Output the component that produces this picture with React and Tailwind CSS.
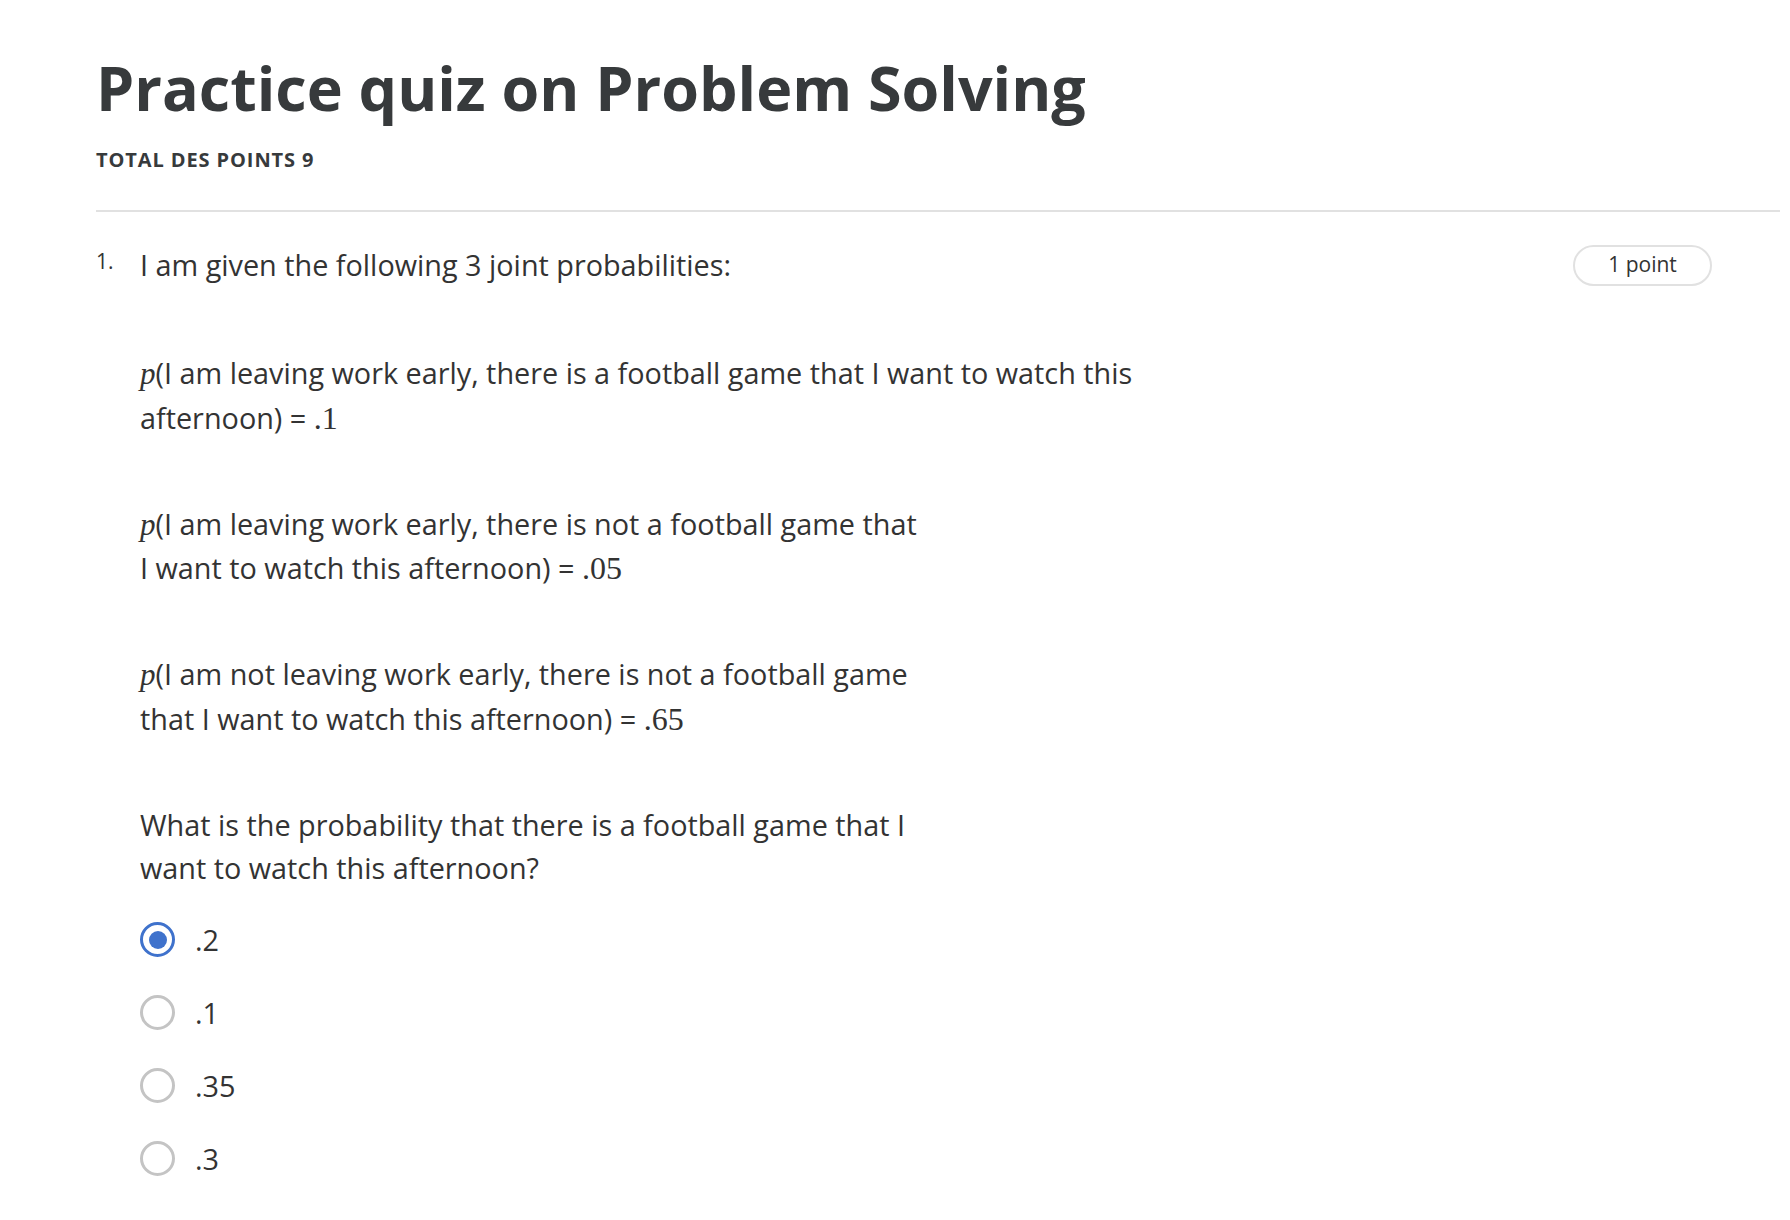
import { useState } from 'react';

const options = ['.2', '.1', '.35', '.3'];

function MathVar({ children }) {
  return (
    <span className="font-['Liberation_Serif',serif] text-[31px] italic">
      {children}
    </span>
  );
}

function MathNum({ children }) {
  return (
    <span className="font-['Liberation_Serif',serif] text-[32px]">{children}</span>
  );
}

function RadioOption({ label, checked, onSelect }) {
  return (
    <label
      className="flex h-[43px] cursor-pointer items-center gap-[20px]"
      onClick={onSelect}
    >
      {checked ? (
        <span className="flex h-[35px] w-[35px] items-center justify-center rounded-full border-[3px] border-[#3f72cc]">
          <span className="h-[18px] w-[18px] rounded-full bg-[#3f72cc]" />
        </span>
      ) : (
        <span className="h-[35px] w-[35px] rounded-full border-[3px] border-[#c4c4c4]" />
      )}
      <span className="text-[28.8px] leading-[43px]">{label}</span>
    </label>
  );
}

export default function App() {
  const [selected, setSelected] = useState('.2');

  return (
    <div className="min-h-screen bg-white pr-[10px] pl-[96px] font-['Open_Sans',sans-serif] text-[#333333]">
      <h1 className="pt-[48px] text-[61px] leading-[80px] font-bold text-[#373a3c]">
        Practice quiz on Problem Solving
      </h1>
      <div className="mt-[20px] text-[20px] leading-[24px] font-bold tracking-[0.9px] text-[#373a3c]">
        TOTAL DES POINTS 9
      </div>

      <div className="mt-[38px] h-[2px] bg-[#e1e1e1]" />

      <div className="flex items-start pt-[32px] pr-[68px]">
        <div className="mt-[2px] w-[44px] shrink-0 text-[21px] leading-[30px]">1.</div>

        <div className="flex grow flex-col">
          <div className="flex items-center justify-between">
            <p className="text-[28.8px] leading-[42px]">
              I am given the following 3 joint probabilities:
            </p>
            <span className="flex h-[41px] w-[139px] items-center justify-center rounded-full border-2 border-[#e1e1e1] text-[21px]">
              1 point
            </span>
          </div>

          <p className="mt-[65px] text-[28.8px] leading-[43.5px]">
            <MathVar>p</MathVar>(I am leaving work early, there is a football game that I want to watch this
            <br />
            afternoon) = <MathNum>.1</MathNum>
          </p>

          <p className="mt-[61.5px] text-[28.8px] leading-[43.5px]">
            <MathVar>p</MathVar>(I am leaving work early, there is not a football game that
            <br />
            I want to watch this afternoon) = <MathNum>.05</MathNum>
          </p>

          <p className="mt-[61.5px] text-[28.8px] leading-[43.5px]">
            <MathVar>p</MathVar>(I am not leaving work early, there is not a football game
            <br />
            that I want to watch this afternoon) = <MathNum>.65</MathNum>
          </p>

          <p className="mt-[61.5px] text-[28.8px] leading-[43.5px]">
            What is the probability that there is a football game that I
            <br />
            want to watch this afternoon?
          </p>

          <div className="mt-[28.5px] flex flex-col gap-[30px] pb-[40px]">
            {options.map((opt) => (
              <RadioOption
                key={opt}
                label={opt}
                checked={selected === opt}
                onSelect={() => setSelected(opt)}
              />
            ))}
          </div>
        </div>
      </div>
    </div>
  );
}
